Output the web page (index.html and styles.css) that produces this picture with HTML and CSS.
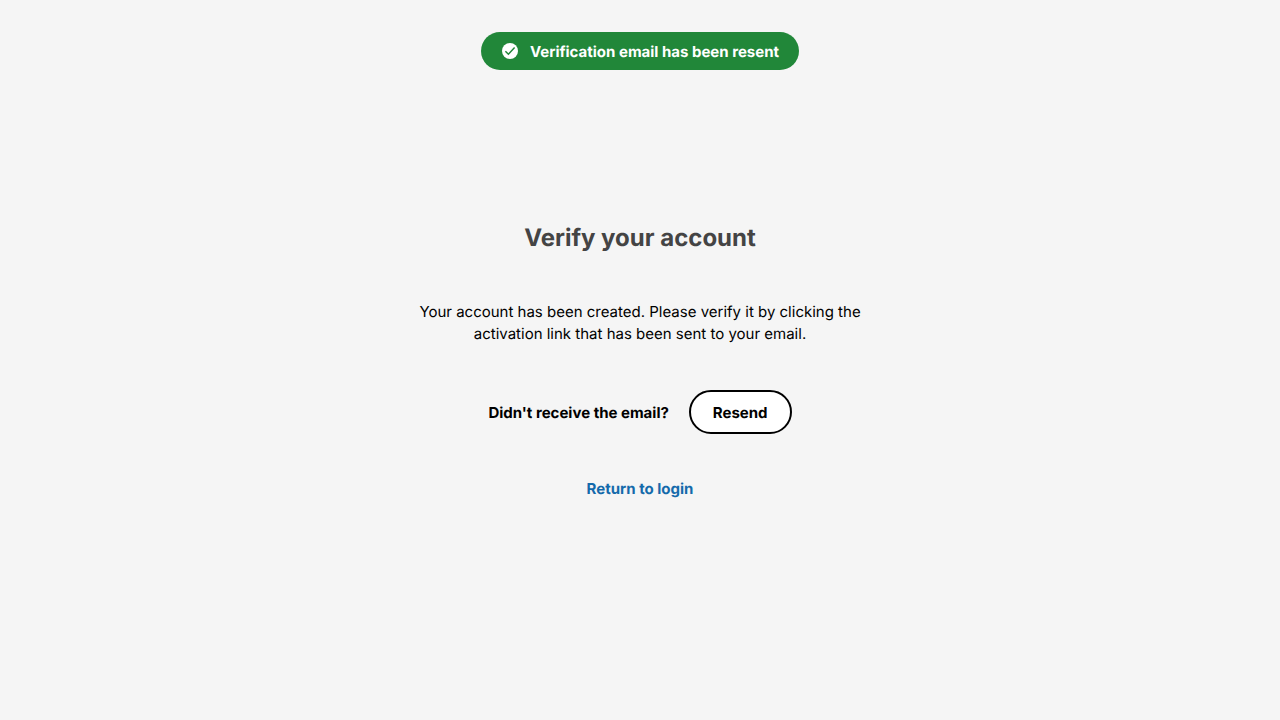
FILE: index.html
```html
<!DOCTYPE html>
<html lang="en">
<head>
<meta charset="utf-8">
<meta name="viewport" content="width=device-width, initial-scale=1">
<title>Verify your account</title>
<link rel="stylesheet" href="styles.css">
</head>
<body>
<div class="toast" role="status">
  <svg class="toast-icon" viewBox="0 0 18 18" aria-hidden="true"><circle cx="9" cy="9" r="8" fill="currentColor"/><path class="toast-check" d="M4.400 9.200l3 3 6.200-6.600"/></svg>
  <span class="toast-text">Verification email has been resent</span>
</div>
<main class="verify">
  <h1 class="verify-title">Verify your account</h1>
  <p class="verify-text">Your account has been created. Please verify it by clicking the activation link that has been sent to your email.</p>
  <div class="verify-resend">
    <span>Didn't receive the email?</span>
    <button class="button" type="button">Resend</button>
  </div>
  <a class="link" href="#">Return to login</a>
</main>
</body>
</html>
```

FILE: styles.css
```css
* {
  box-sizing: border-box;
}

body {
  margin: 0;
  min-height: 100vh;
  display: flex;
  flex-direction: column;
  align-items: center;
  justify-content: center;
  background: #f5f5f5;
  color: #000;
  font: 400 15px/22px Inter, "Liberation Sans", sans-serif;
  text-rendering: geometricPrecision;
  -webkit-font-smoothing: antialiased;
}

.toast {
  position: fixed;
  top: 32px;
  left: 0;
  right: 0;
  width: fit-content;
  margin: 0 auto;
  display: flex;
  align-items: center;
  gap: 11px;
  padding: 7px 20px;
  border-radius: 20px;
  background: #218739;
  color: #fff;
  font-weight: 700;
}

.toast-icon {
  width: 18px;
  height: 18px;
}

.toast-check {
  fill: none;
  stroke: #218739;
  stroke-width: 1.500;
}

.toast-text {
  padding-top: 2px;
}

.verify {
  display: flex;
  flex-direction: column;
  align-items: center;
  max-width: 480px;
  padding: 0 16px;
  text-align: center;
}

.verify-title {
  margin: 0 0 45px;
  color: #444;
  font-size: 24px;
  line-height: 36px;
  font-weight: 700;
}

.verify-text {
  margin: 0 0 45px;
}

.verify-resend {
  display: flex;
  align-items: baseline;
  gap: 20px;
  margin-bottom: 44px;
  font-weight: 700;
}

.button {
  padding: 10px 22px 8px;
  border: 2px solid #000;
  border-radius: 22px;
  background: #fff;
  color: #000;
  font: inherit;
  text-rendering: inherit;
  cursor: pointer;
}

.link {
  color: #146aab;
  font-weight: 700;
  text-decoration: none;
}
```
